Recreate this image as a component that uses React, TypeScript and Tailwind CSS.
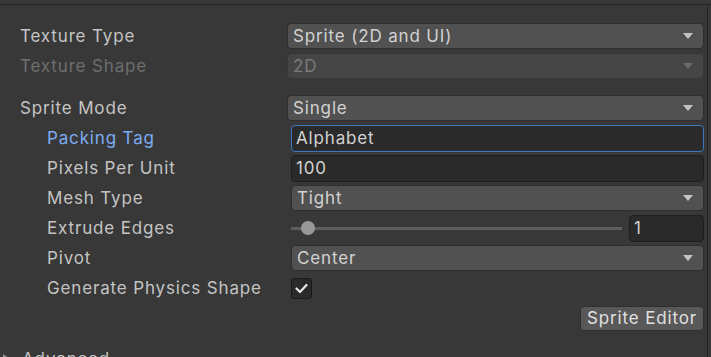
import React from "react";

const Arrow = ({ dim }: { dim?: boolean }) => (
  <svg width="10" height="6" viewBox="0 0 10 6" className="shrink-0">
    <path d="M0 0 L10 0 L5 6 Z" fill={dim ? "#6a6a6a" : "#c4c4c4"} />
  </svg>
);

const Dropdown = ({ value, dim }: { value: string; dim?: boolean }) => (
  <div
    className={
      "flex-1 h-[26px] flex items-center justify-between pl-[5px] pr-[10px] rounded-[4px] border " +
      (dim
        ? "bg-[#454545] border-[#363636] text-[#7a7a7a]"
        : "bg-[#515151] border-[#2e2e2e] text-[#d2d2d2]")
    }
  >
    <span>{value}</span>
    <Arrow dim={dim} />
  </div>
);

const Row = ({
  label,
  nested,
  labelClass,
  children,
}: {
  label: string;
  nested?: boolean;
  labelClass?: string;
  children: React.ReactNode;
}) => (
  <div className="h-[30px] flex items-center">
    <div
      className={
        "w-[267px] shrink-0 whitespace-nowrap " +
        (nested ? "pl-[27px] " : "") +
        (labelClass ?? "text-[#c4c4c4]")
      }
    >
      {label}
    </div>
    <div className={"flex-1 flex items-center " + (nested ? "pl-[4px]" : "")}>{children}</div>
  </div>
);

export default function App() {
  return (
    <div className="w-[711px] h-[357px] bg-[#383838] overflow-hidden flex flex-col font-['Inter',sans-serif] text-[17px] tracking-[0.85px] leading-none">
      <div className="h-[4px] shrink-0 bg-[#383838]" />
      <div className="h-px shrink-0 bg-[#232323]" />
      <div className="flex-1 flex min-h-0">
        <div className="flex-1 pl-[20px] pr-[3px] pt-[16px]">
          <Row label="Texture Type">
            <Dropdown value="Sprite (2D and UI)" />
          </Row>
          <Row label="Texture Shape" labelClass="text-[#6e6e6e]">
            <Dropdown value="2D" dim />
          </Row>
          <div className="h-[12px]" />
          <Row label="Sprite Mode">
            <Dropdown value="Single" />
          </Row>
          <Row label="Packing Tag" nested labelClass="text-[#7bacf2]">
            <div className="flex-1 h-[27px] flex items-center pl-[4px] rounded-[4px] border border-[#3b78bd] bg-[#2a2a2a] text-[#d2d2d2]">
              Alphabet
            </div>
          </Row>
          <Row label="Pixels Per Unit" nested>
            <div className="flex-1 h-[27px] flex items-center pl-[4px] rounded-[4px] border border-[#1e1e1e] bg-[#2a2a2a] text-[#d2d2d2]">
              100
            </div>
          </Row>
          <Row label="Mesh Type" nested>
            <Dropdown value="Tight" />
          </Row>
          <Row label="Extrude Edges" nested>
            <div className="flex-1 flex items-center gap-[7px]">
              <div className="flex-1 relative h-[14px] flex items-center">
                <div className="w-full h-[3px] bg-[#5e5e5e]" />
                <div className="absolute left-[10px] top-0 w-[14px] h-[14px] rounded-full bg-[#999999]" />
              </div>
              <div className="w-[75px] h-[27px] flex items-center pl-[4px] rounded-[4px] border border-[#1e1e1e] bg-[#2a2a2a] text-[#d2d2d2]">
                1
              </div>
            </div>
          </Row>
          <Row label="Pivot" nested>
            <Dropdown value="Center" />
          </Row>
          <Row label="Generate Physics Shape" nested>
            <div className="w-[21px] h-[21px] rounded-[3px] border border-[#1a1a1a] bg-[#2a2a2a] flex items-center justify-center">
              <svg width="13" height="11" viewBox="0 0 13 11">
                <path d="M1.5 5.5 L5 9 L11.5 2" stroke="#e6e6e6" strokeWidth="2.2" fill="none" strokeLinecap="round" strokeLinejoin="round" />
              </svg>
            </div>
          </Row>
          <div className="h-[30px] flex items-center justify-end">
            <div className="h-[25px] px-[6px] flex items-center rounded-[4px] border border-[#2f2f2f] bg-[#585858] text-[#e0e0e0]">
              Sprite Editor
            </div>
          </div>
          <div className="h-[30px] flex items-center -ml-[17px] mt-[11px] gap-[11px]">
            <svg width="8" height="10" viewBox="0 0 8 10">
              <path d="M0 0 L8 5 L0 10 Z" fill="#8a8a8a" />
            </svg>
            <span className="text-[#c4c4c4]">Advanced</span>
          </div>
        </div>
        <div className="w-px shrink-0 bg-[#232323]" />
        <div className="w-[3px] shrink-0 bg-[#383838]" />
      </div>
    </div>
  );
}
